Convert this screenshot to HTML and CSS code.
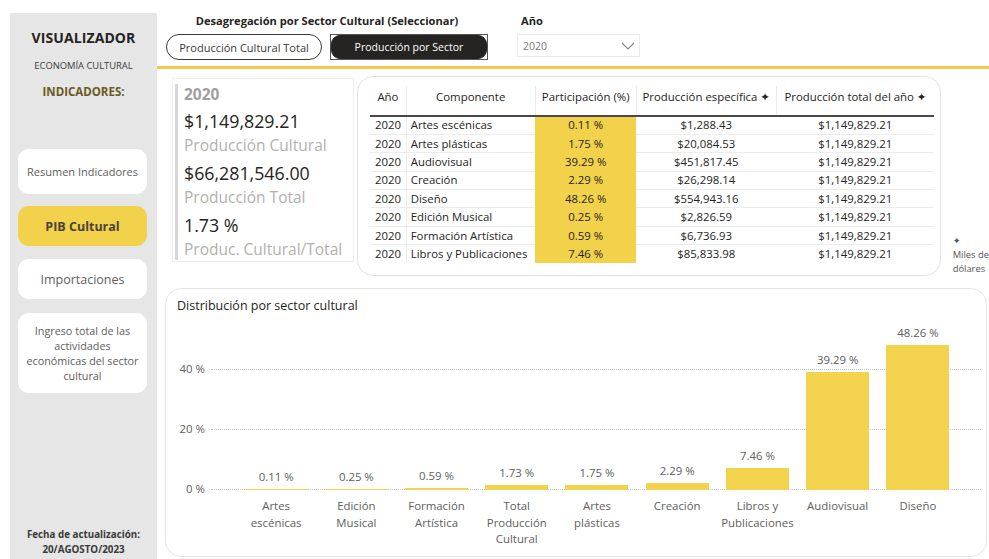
FILE: index.html
```html
<!DOCTYPE html>
<html lang="es">
<head>
<meta charset="utf-8">
<title>Visualizador Economía Cultural</title>
<link rel="stylesheet" href="styles.css">
</head>
<body>
<div class="app">
  <aside class="sidebar">
    <div class="brand">VISUALIZADOR</div>
    <div class="brand-sub">ECONOMÍA CULTURAL</div>
    <div class="brand-section">INDICADORES:</div>
    <nav class="nav">
      <div class="nav-btn nav-resumen">Resumen Indicadores</div>
      <div class="nav-btn nav-active">PIB Cultural</div>
      <div class="nav-btn nav-import">Importaciones</div>
      <div class="nav-btn nav-ingreso">Ingreso total de las actividades económicas del sector cultural</div>
    </nav>
    <div class="updated">Fecha de actualización:<br>20/AGOSTO/2023</div>
  </aside>

  <main class="main">
    <header class="topbar">
      <div class="filter-group">
        <div class="filter-title">Desagregación por Sector Cultural (Seleccionar)</div>
        <div class="toggle-row">
          <div class="toggle">Producción Cultural Total</div>
          <div class="toggle-frame"><div class="toggle toggle-on">Producción por Sector</div></div>
        </div>
      </div>
      <div class="year-group">
        <div class="filter-title">Año</div>
        <div class="select">
          <span>2020</span>
          <svg class="chev" width="14" height="8" viewBox="0 0 14 8"><path d="M1 1 L7 7 L13 1" fill="none" stroke="#8a8886" stroke-width="1.1"/></svg>
        </div>
      </div>
    </header>
    <div class="rule"></div>

    <section class="upper">
      <div class="kpi">
        <div class="kpi-inner">
          <div class="kpi-year">2020</div>
          <div class="kpi-value">$1,149,829.21</div>
          <div class="kpi-label">Producción Cultural</div>
          <div class="kpi-value">$66,281,546.00</div>
          <div class="kpi-label">Producción Total</div>
          <div class="kpi-value">1.73 %</div>
          <div class="kpi-label">Produc. Cultural/Total</div>
        </div>
      </div>

      <div class="table-card">
        <table class="grid">
          <colgroup>
            <col class="c-year"><col class="c-comp"><col class="c-part"><col class="c-spec"><col class="c-total">
          </colgroup>
          <thead>
            <tr>
              <th>Año</th>
              <th>Componente</th>
              <th>Participación (%)</th>
              <th>Producción específica ✦</th>
              <th class="last">Producción total del año ✦</th>
            </tr>
          </thead>
          <tbody>
            <tr><td class="yr">2020</td><td class="comp">Artes escénicas</td><td class="part">0.11 %</td><td>$1,288.43</td><td>$1,149,829.21</td></tr>
            <tr><td class="yr">2020</td><td class="comp">Artes plásticas</td><td class="part">1.75 %</td><td>$20,084.53</td><td>$1,149,829.21</td></tr>
            <tr><td class="yr">2020</td><td class="comp">Audiovisual</td><td class="part">39.29 %</td><td>$451,817.45</td><td>$1,149,829.21</td></tr>
            <tr><td class="yr">2020</td><td class="comp">Creación</td><td class="part">2.29 %</td><td>$26,298.14</td><td>$1,149,829.21</td></tr>
            <tr><td class="yr">2020</td><td class="comp">Diseño</td><td class="part">48.26 %</td><td>$554,943.16</td><td>$1,149,829.21</td></tr>
            <tr><td class="yr">2020</td><td class="comp">Edición Musical</td><td class="part">0.25 %</td><td>$2,826.59</td><td>$1,149,829.21</td></tr>
            <tr><td class="yr">2020</td><td class="comp">Formación Artística</td><td class="part">0.59 %</td><td>$6,736.93</td><td>$1,149,829.21</td></tr>
            <tr><td class="yr">2020</td><td class="comp">Libros y Publicaciones</td><td class="part">7.46 %</td><td>$85,833.98</td><td>$1,149,829.21</td></tr>
          </tbody>
        </table>
      </div>

      <div class="note">✦<br>Miles de<br>dólares</div>
    </section>

    <section class="chart-card">
      <div class="chart-title">Distribución por sector cultural</div>
      <div class="plot">
        <div class="gridline g40"><span>40 %</span></div>
        <div class="gridline g20"><span>20 %</span></div>
        <div class="gridline g0"><span>0 %</span></div>
        <div class="bars">
          <div class="bar-col"><div class="val">0.11 %</div><div class="bar" style="height:0.6px"></div></div>
          <div class="bar-col"><div class="val">0.25 %</div><div class="bar" style="height:0.9px"></div></div>
          <div class="bar-col"><div class="val">0.59 %</div><div class="bar" style="height:1.8px"></div></div>
          <div class="bar-col"><div class="val">1.73 %</div><div class="bar" style="height:5.2px"></div></div>
          <div class="bar-col"><div class="val">1.75 %</div><div class="bar" style="height:5.3px"></div></div>
          <div class="bar-col"><div class="val">2.29 %</div><div class="bar" style="height:6.9px"></div></div>
          <div class="bar-col"><div class="val">7.46 %</div><div class="bar" style="height:22.4px"></div></div>
          <div class="bar-col"><div class="val">39.29 %</div><div class="bar" style="height:117.9px"></div></div>
          <div class="bar-col"><div class="val">48.26 %</div><div class="bar" style="height:144.8px"></div></div>
        </div>
      </div>
      <div class="xlabels">
        <div>Artes<br>escénicas</div>
        <div>Edición<br>Musical</div>
        <div>Formación<br>Artística</div>
        <div>Total<br>Producción<br>Cultural</div>
        <div>Artes<br>plásticas</div>
        <div>Creación</div>
        <div>Libros y<br>Publicaciones</div>
        <div>Audiovisual</div>
        <div>Diseño</div>
      </div>
    </section>
  </main>
</div>
</body>
</html>
```

FILE: styles.css
```css
* { box-sizing: border-box; }

html, body {
  margin: 0;
  padding: 0;
}

body {
  width: 989px;
  height: 559px;
  overflow: hidden;
  background: #ffffff;
  font-family: "Open Sans", "Noto Sans", "DejaVu Sans", sans-serif;
  color: #252423;
}

.app {
  display: flex;
  height: 559px;
}

/* ---------- sidebar ---------- */
.sidebar {
  margin: 13px 0 0 10px;
  width: 147px;
  flex: none;
  background: #e6e6e6;
  display: flex;
  flex-direction: column;
  align-items: center;
}

.brand {
  margin-top: 16px;
  font-size: 14px;
  font-weight: 700;
  line-height: 18px;
  letter-spacing: 0.1px;
  color: #252423;
}

.brand-sub {
  margin-top: 13px;
  font-size: 9.4px;
  line-height: 12px;
  color: #3b3a39;
}

.brand-section {
  margin-top: 12px;
  font-size: 11.5px;
  font-weight: 700;
  line-height: 16px;
  color: #6a5a1e;
}

.nav {
  margin-top: 49px;
  display: flex;
  flex-direction: column;
  gap: 12px;
  width: 129px;
  margin-left: -2px;
}

.nav-btn {
  background: #ffffff;
  border-radius: 11px;
  display: flex;
  align-items: center;
  justify-content: center;
  text-align: center;
  color: #605e5c;
}

.nav-resumen {
  height: 45px;
  font-size: 11px;
}

.nav-active {
  height: 40px;
  background: #f2d14b;
  color: #4b4336;
  font-weight: 700;
  font-size: 12.5px;
}

.nav-import {
  height: 40px;
  margin-top: 1px;
  font-size: 12.5px;
}

.nav-ingreso {
  height: 80px;
  margin-top: 2px;
  font-size: 10.8px;
  line-height: 15px;
  padding: 0 6px;
}

.updated {
  margin-top: auto;
  margin-bottom: 2px;
  text-align: center;
  font-size: 9.8px;
  font-weight: 700;
  line-height: 15px;
  color: #3b3a39;
}

/* ---------- main column ---------- */
.main {
  flex: 1;
  min-width: 0;
  display: flex;
  flex-direction: column;
}

.topbar {
  height: 66px;
  display: flex;
  padding-left: 9px;
}

.filter-group {
  width: 322px;
  display: flex;
  flex-direction: column;
  align-items: center;
}

.filter-title {
  margin-top: 13px;
  font-size: 11.1px;
  font-weight: 700;
  line-height: 16px;
  color: #252423;
}

.toggle-row {
  margin-top: 5px;
  display: flex;
  gap: 8px;
  width: 100%;
}

.toggle {
  width: 156px;
  height: 26px;
  border: 1px solid #3b3a39;
  border-radius: 13px;
  display: flex;
  align-items: center;
  justify-content: center;
  font-size: 11px;
  color: #3b3a39;
}

.toggle-frame {
  width: 158px;
  height: 26px;
  border: 1px solid #555;
}

.toggle-on {
  width: 100%;
  height: 100%;
  background: #252423;
  border-color: #252423;
  border-radius: 9px;
  color: #ffffff;
  font-size: 10.5px;
}

.year-group {
  margin-left: 29px;
  display: flex;
  flex-direction: column;
}

.year-group .filter-title {
  padding-left: 4px;
}

.select {
  margin-top: 5px;
  width: 123px;
  height: 23px;
  border: 1px solid #ececec;
  display: flex;
  align-items: center;
  justify-content: space-between;
  padding: 0 4px 0 5px;
  font-size: 10.5px;
  color: #7a7876;
}

.rule {
  height: 3px;
  background: #f2c94c;
}

/* ---------- upper row: KPIs + table ---------- */
.upper {
  display: flex;
  margin-top: 7px;
  height: 200px;
}

.kpi {
  margin: 2px 0 0 15px;
  width: 183px;
  height: 184px;
  border: 1px solid #ededed;
  padding: 6px 0 0 2px;
}

.kpi-inner {
  height: 100%;
  border-left: 3px solid #d6d6d6;
  padding-left: 6px;
}

.kpi-year {
  font-size: 15.5px;
  font-weight: 700;
  line-height: 20px;
  color: #a19f9d;
  margin-top: -1px;
}

.kpi-value {
  font-size: 17.8px;
  line-height: 26px;
  color: #252423;
  margin-top: 4px;
}

.kpi-label {
  font-size: 15.5px;
  line-height: 22px;
  color: #b3b0ad;
}

.table-card {
  margin-left: 3px;
  width: 586px;
  height: 200px;
  border: 1px solid #e3e3e3;
  border-radius: 16px;
  padding: 9px 0 0 12px;
}

.grid {
  border-collapse: collapse;
  table-layout: fixed;
  width: 564px;
  font-size: 11.4px;
  color: #252423;
}

.c-year { width: 36px; }
.c-comp { width: 129px; }
.c-part { width: 101px; }
.c-spec { width: 140px; }
.c-total { width: 158px; }

.grid th {
  height: 30px;
  font-weight: 400;
  text-align: center;
  vertical-align: top;
  line-height: 16px;
  white-space: nowrap;
  border-right: 1px solid #ececec;
  border-bottom: 2px solid #4a4948;
  padding: 3px 0 0;
}

.grid th.last { border-right: none; }

.grid td {
  height: 18.4px;
  padding: 0;
  text-align: center;
  white-space: nowrap;
  border-bottom: 1px solid #ececec;
  line-height: 16px;
}

.grid tbody tr:last-child td { border-bottom: none; }

.grid td.yr {
  border-right: 1px solid #ececec;
  text-align: center;
}

.grid td.comp {
  text-align: left;
  padding-left: 4px;
}

.grid td.part {
  background: #f2d14b;
  border-bottom-color: #f2d14b;
}

.note {
  margin: 158px 0 0 12px;
  font-size: 9.4px;
  line-height: 14px;
  color: #555;
  white-space: nowrap;
}

/* ---------- chart ---------- */
.chart-card {
  margin: 12px 0 0 8px;
  width: 822px;
  height: 269px;
  border: 1px solid #e6e6e6;
  border-radius: 16px;
  padding: 8px 0 0 11px;
}

.chart-title {
  font-size: 12.5px;
  line-height: 18px;
  color: #252423;
}

.plot {
  position: relative;
  margin: 6px 0 0 34px;
  width: 770px;
  height: 169px;
}

.gridline {
  position: absolute;
  left: 0;
  right: 0;
  height: 0;
  border-top: 1px dotted #c8c6c4;
}

.gridline span {
  position: absolute;
  right: calc(100% + 6px);
  top: -9px;
  font-size: 11.4px;
  line-height: 16px;
  color: #605e5c;
  white-space: nowrap;
}

.g40 { bottom: 120px; }
.g20 { bottom: 60px; }
.g0 { bottom: 0; }

.bars {
  position: relative;
  display: flex;
  align-items: flex-end;
  height: 100%;
  width: 722px;
  margin-left: 25px;
}

.bar-col {
  flex: 1;
  display: flex;
  flex-direction: column;
  align-items: center;
  justify-content: flex-end;
}

.val {
  font-size: 11.4px;
  line-height: 16px;
  color: #605e5c;
  margin-bottom: 4px;
}

.bar {
  width: 63px;
  background: #f3d24e;
}

.xlabels {
  display: flex;
  margin: 8px 0 0 59px;
  width: 722px;
}

.xlabels div {
  flex: 1;
  text-align: center;
  font-size: 11.4px;
  line-height: 16.5px;
  color: #605e5c;
}
```
